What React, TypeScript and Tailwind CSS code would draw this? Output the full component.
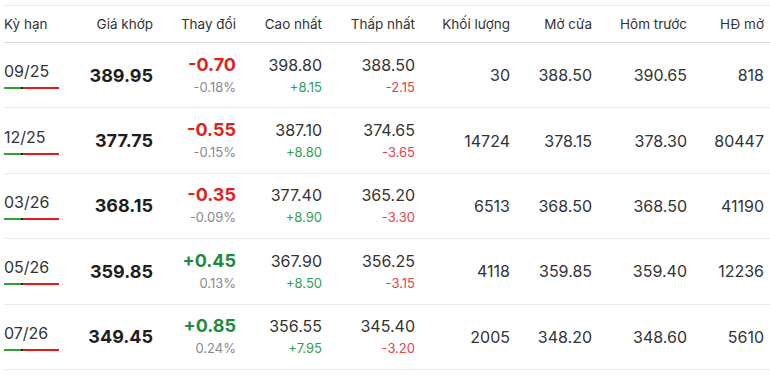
import React from "react";

type Row = {
  ky: string;
  gia: string;
  chg: string;
  pct: string;
  up: boolean;
  cao: string;
  caoD: string;
  thap: string;
  thapD: string;
  kl: string;
  mo: string;
  hom: string;
  hd: string;
};

const rows: Row[] = [
  { ky: "09/25", gia: "389.95", chg: "-0.70", pct: "-0.18%", up: false, cao: "398.80", caoD: "+8.15", thap: "388.50", thapD: "-2.15", kl: "30", mo: "388.50", hom: "390.65", hd: "818" },
  { ky: "12/25", gia: "377.75", chg: "-0.55", pct: "-0.15%", up: false, cao: "387.10", caoD: "+8.80", thap: "374.65", thapD: "-3.65", kl: "14724", mo: "378.15", hom: "378.30", hd: "80447" },
  { ky: "03/26", gia: "368.15", chg: "-0.35", pct: "-0.09%", up: false, cao: "377.40", caoD: "+8.90", thap: "365.20", thapD: "-3.30", kl: "6513", mo: "368.50", hom: "368.50", hd: "41190" },
  { ky: "05/26", gia: "359.85", chg: "+0.45", pct: "0.13%", up: true, cao: "367.90", caoD: "+8.50", thap: "356.25", thapD: "-3.15", kl: "4118", mo: "359.85", hom: "359.40", hd: "12236" },
  { ky: "07/26", gia: "349.45", chg: "+0.85", pct: "0.24%", up: true, cao: "356.55", caoD: "+7.95", thap: "345.40", thapD: "-3.20", kl: "2005", mo: "348.20", hom: "348.60", hd: "5610" },
];

const cols = "grid grid-cols-[75px_80px_83px_86px_93px_95px_82px_95px_77px]";

export default function App() {
  return (
    <div
      className="w-[770px] h-[375px] bg-white overflow-hidden pt-[5px] pl-[4px]"
      style={{ fontFamily: "Inter, 'Noto Sans', sans-serif" }}
    >
      <div className="w-[766px]">
        <div className={`${cols} h-[38px] border-t border-b border-t-[#e8eaee] border-b-[#d6d9de] items-center text-[13.5px] text-[#333]`}>
          <div className="text-left">Kỳ hạn</div>
          <div className="text-right pr-[6px]">Giá khớp</div>
          <div className="text-right pr-[6px]">Thay đổi</div>
          <div className="text-right pr-[6px]">Cao nhất</div>
          <div className="text-right pr-[6px]">Thấp nhất</div>
          <div className="text-right pr-[6px]">Khối lượng</div>
          <div className="text-right pr-[6px]">Mở cửa</div>
          <div className="text-right pr-[6px]">Hôm trước</div>
          <div className="text-right pr-[6px]">HĐ mở</div>
        </div>
        {rows.map((r) => (
          <div
            key={r.ky}
            className={`${cols} h-[65.4px] border-b border-[#e6e8ec] items-center text-[#333]`}
          >
            <div className="flex flex-col items-start">
              <div className="text-[16px] leading-[20px] text-[#333]">{r.ky}</div>
              <div className="flex mt-[6px] h-[2px] w-[55px]">
                <div className="w-[17px] bg-[#2ea12e]" />
                <div className="w-[2px] bg-[#222]" />
                <div className="w-[36px] bg-[#e81818]" />
              </div>
            </div>
            <div className="text-right pr-[6px] text-[18px] font-bold text-[#1e1e1e]">{r.gia}</div>
            <div className="flex flex-col items-end pr-[6px]">
              <div className={`text-[18px] leading-[22px] font-bold ${r.up ? "text-[#1e8a3f]" : "text-[#e0221c]"}`}>{r.chg}</div>
              <div className="text-[13px] leading-[20px] mt-[1px] text-[#8a8a8a]">{r.pct}</div>
            </div>
            <div className="flex flex-col items-end pr-[6px]">
              <div className="text-[16px] leading-[22px] text-[#333]">{r.cao}</div>
              <div className="text-[13px] leading-[20px] mt-[1px] text-[#2f9e50]">{r.caoD}</div>
            </div>
            <div className="flex flex-col items-end pr-[6px]">
              <div className="text-[16px] leading-[22px] text-[#333]">{r.thap}</div>
              <div className="text-[13px] leading-[20px] mt-[1px] text-[#e5434a]">{r.thapD}</div>
            </div>
            <div className="text-right pr-[6px] text-[16px]">{r.kl}</div>
            <div className="text-right pr-[6px] text-[16px]">{r.mo}</div>
            <div className="text-right pr-[6px] text-[16px]">{r.hom}</div>
            <div className="text-right pr-[6px] text-[16px]">{r.hd}</div>
          </div>
        ))}
      </div>
    </div>
  );
}
